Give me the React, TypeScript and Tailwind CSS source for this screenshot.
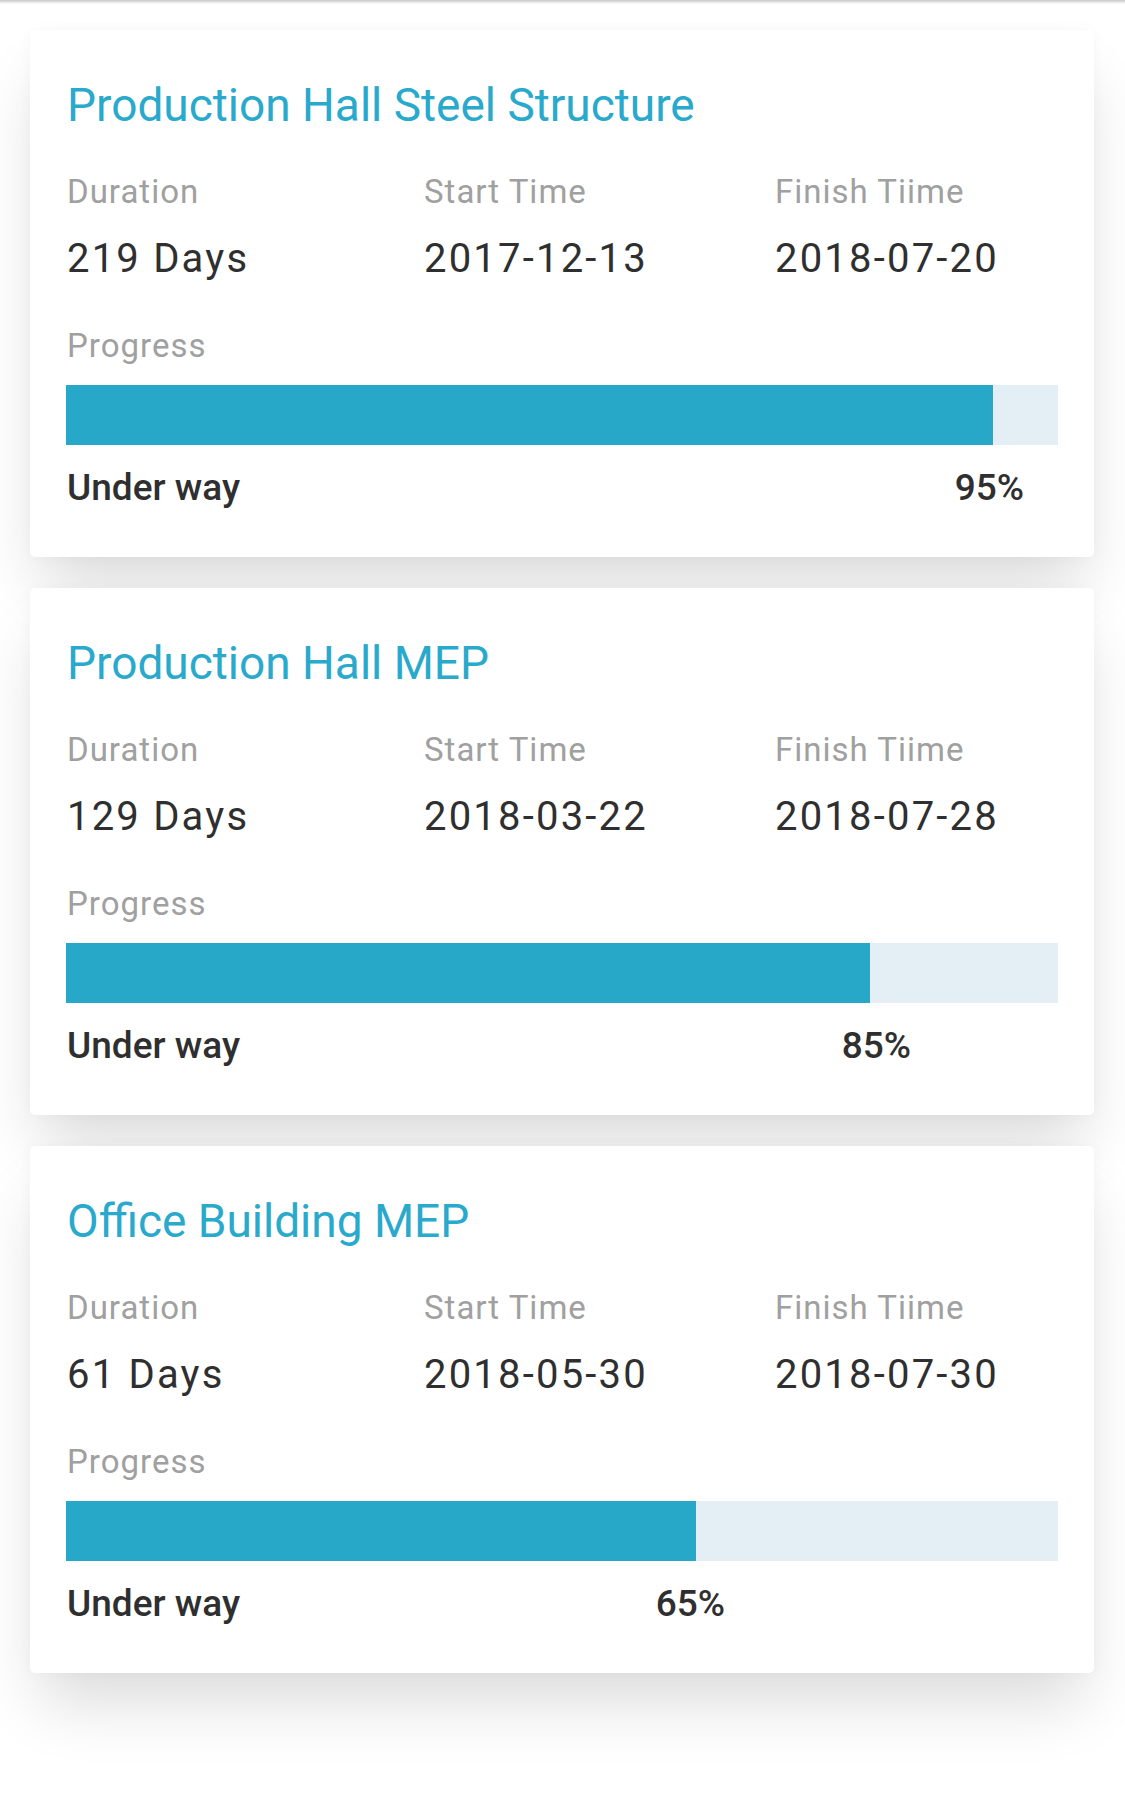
import React from 'react';

type Task = {
  title: string;
  duration: string;
  start: string;
  finish: string;
  fill: number; // px of the 993px bar
  pctRight: number; // right edge of the percentage, from the bar's left
  pct: string;
};

const tasks: Task[] = [
  { title: 'Production Hall Steel Structure', duration: '219 Days', start: '2017-12-13', finish: '2018-07-20', fill: 927, pctRight: 957, pct: '95%' },
  { title: 'Production Hall MEP', duration: '129 Days', start: '2018-03-22', finish: '2018-07-28', fill: 804, pctRight: 844, pct: '85%' },
  { title: 'Office Building MEP', duration: '61 Days', start: '2018-05-30', finish: '2018-07-30', fill: 630, pctRight: 658, pct: '65%' },
];

const font = { fontFamily: 'Roboto, "Noto Sans", sans-serif' };

const Field: React.FC<{ label: string; value: string; className?: string }> = ({ label, value, className }) => (
  <div className={className}>
    <div className="text-[33px] leading-[40px] tracking-[1px] text-[#a0a0a0]">{label}</div>
    <div className="mt-[22px] text-[40px] leading-[50px] tracking-[2.2px] text-[#2f2f2f]">{value}</div>
  </div>
);

const TaskCard: React.FC<{ task: Task }> = ({ task }) => (
  <div className="h-[527px] bg-white rounded-[5px] pl-[37px] pr-[36px] pt-[45px] shadow-[0_40px_60px_-10px_rgba(0,0,0,0.14),0_0_14px_rgba(0,0,0,0.03)]">
    <h2 className="text-[46px] leading-[60px] text-[#29a9cb] font-normal">{task.title}</h2>

    <div className="mt-[37px] flex">
      <Field label="Duration" value={task.duration} className="w-[357px]" />
      <Field label="Start Time" value={task.start} className="w-[351px]" />
      <Field label="Finish Tiime" value={task.finish} className="flex-1" />
    </div>

    <div className="mt-[42px] text-[33px] leading-[40px] tracking-[1px] text-[#a0a0a0]">Progress</div>

    <div className="-ml-px mt-[19px] h-[60px] bg-[#e3eff4] flex">
      <div className="h-full bg-[#27a8c9]" style={{ width: task.fill }} />
    </div>

    <div
      className="mt-[18px] flex justify-between text-[37px] leading-[50px] font-medium text-[#2f2f2f]"
      style={{ width: task.pctRight }}
    >
      <span>Under way</span>
      <span>{task.pct}</span>
    </div>
  </div>
);

export default function App() {
  return (
    <div className="w-[1125px] min-h-[1809px] bg-white" style={font}>
      <div className="h-[4px] bg-gradient-to-b from-[#c9c9c9] to-white" />
      <div className="pt-[26px] pl-[30px] pr-[31px] flex flex-col gap-[31px]">
        {tasks.map((t) => (
          <TaskCard key={t.title} task={t} />
        ))}
      </div>
    </div>
  );
}
